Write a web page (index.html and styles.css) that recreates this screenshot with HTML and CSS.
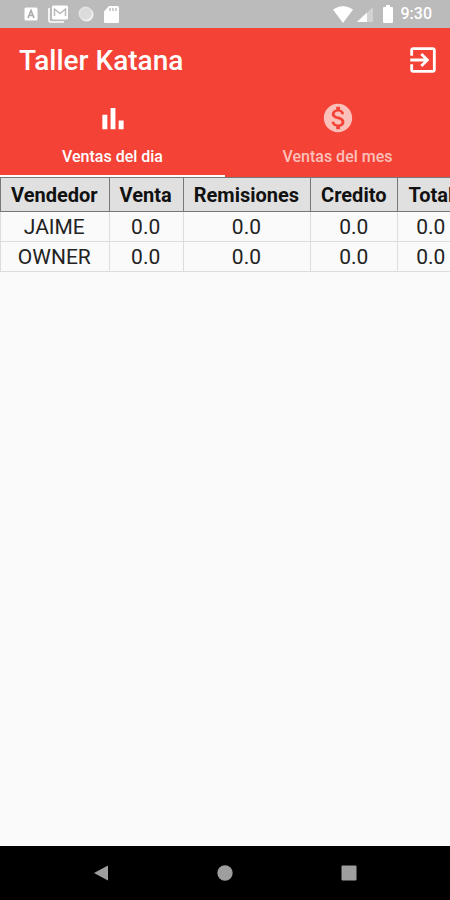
FILE: index.html
```html
<!DOCTYPE html>
<html lang="es">
<head>
    <meta charset="UTF-8">
    <meta name="viewport" content="width=device-width, initial-scale=1.0">
    <title>Taller Katana</title>
    <link rel="stylesheet" href="styles.css">
</head>
<body>

<div class="status-bar">
    <div class="status-left">
        <svg width="14" height="14" viewBox="0 0 14 14">
            <rect x="0.5" y="0.5" width="13" height="13" rx="1.5" fill="#fff"/>
            <path d="M4 11L7 3.5L10 11M5 8.5H9" fill="none" stroke="#aaa" stroke-width="1.6"/>
        </svg>
        <svg width="20" height="18" viewBox="0 0 20 18">
            <path d="M1 3V15.500Q1 17 2.500 17H16" fill="none" stroke="#fff" stroke-width="1.600"/>
            <rect x="4" y="0.500" width="16" height="14" rx="1.500" fill="#fff"/>
            <path d="M6.500 11V4L12 8.500L17.500 4V11" fill="none" stroke="#bbb" stroke-width="1.500"/>
        </svg>
        <svg width="16" height="16" viewBox="0 0 16 16">
            <circle cx="8.500" cy="8.500" r="7" fill="#f5f5f5"/>
            <circle cx="7.500" cy="7.500" r="6.500" fill="#dcdcdc" stroke="#e8e8e8"/>
        </svg>
        <svg width="15" height="17" viewBox="0 0 15 17">
            <path d="M5 0H13.500Q15 0 15 1.500V15.500Q15 17 13.500 17H1.500Q0 17 0 15.500V5.500Z" fill="#fff"/>
            <path d="M6 2V5M9 2V5M12 2V5" stroke="#bbb" stroke-width="1.400"/>
        </svg>
    </div>
    <div class="status-right">
        <svg width="20" height="17" viewBox="0 0 20 17">
            <path d="M0 3.500Q10 -3.500 20 3.500L10 17Z" fill="#fff"/>
        </svg>
        <svg class="signal" width="16" height="15" viewBox="0 0 16 15">
            <path d="M0 15L16 0V15Z" fill="#d2d2d2"/>
            <path d="M0 15L10 5.600V15Z" fill="#fff"/>
        </svg>
        <svg class="battery" width="10" height="18" viewBox="0 0 10 18">
            <path d="M3 0H7V2H9Q10 2 10 3V17Q10 18 9 18H1Q0 18 0 17V3Q0 2 1 2H3Z" fill="#fff"/>
        </svg>
        <span class="clock">9:30</span>
    </div>
</div>

<header class="app-header">
    <div class="toolbar">
        <h1>Taller Katana</h1>
        <button class="exit-button" aria-label="Salir">
            <svg width="34" height="34" viewBox="0 0 24 24">
                <path fill="#fff" d="M10.090 15.590L11.500 17l5-5-5-5-1.410 1.410L12.670 11H3v2h9.670l-2.580 2.590zM19 3H5c-1.110 0-2 .9-2 2v4h2V5h14v14H5v-4H3v4c0 1.100.89 2 2 2h14c1.100 0 2-.9 2-2V5c0-1.100-.9-2-2-2z"/>
            </svg>
        </button>
    </div>
    <nav class="tabs">
        <button class="tab active">
            <svg width="34" height="34" viewBox="0 0 24 24">
                <path fill="currentColor" d="M4.500 9.700H8V20H4.500zM10.300 5h3.400v15h-3.400zM16 13.800h3.500V20H16z"/>
            </svg>
            <span>Ventas del dia</span>
        </button>
        <button class="tab">
            <svg width="34" height="34" viewBox="0 0 24 24">
                <path fill="currentColor" d="M12 2C6.480 2 2 6.480 2 12s4.480 10 10 10 10-4.480 10-10S17.520 2 12 2zm1.410 16.090V20h-2.670v-1.930c-1.710-.36-3.160-1.460-3.270-3.400h1.960c.1 1.050.82 1.870 2.650 1.870 1.960 0 2.400-.98 2.400-1.590 0-.83-.44-1.610-2.670-2.140-2.480-.6-4.180-1.620-4.180-3.670 0-1.720 1.390-2.840 3.110-3.210V4h2.670v1.950c1.860.45 2.790 1.860 2.850 3.390H14.300c-.05-1.110-.64-1.870-2.220-1.870-1.500 0-2.400.68-2.400 1.640 0 .84.65 1.390 2.670 1.910s4.180 1.390 4.180 3.910c-.01 1.830-1.380 2.830-3.120 3.160z"/>
            </svg>
            <span>Ventas del mes</span>
        </button>
    </nav>
</header>

<main class="content">
    <table class="sales">
        <thead>
            <tr>
                <th>Vendedor</th>
                <th>Venta</th>
                <th>Remisiones</th>
                <th>Credito</th>
                <th>Total</th>
            </tr>
        </thead>
        <tbody>
            <tr>
                <td>JAIME</td>
                <td>0.0</td>
                <td>0.0</td>
                <td>0.0</td>
                <td>0.0</td>
            </tr>
            <tr>
                <td>OWNER</td>
                <td>0.0</td>
                <td>0.0</td>
                <td>0.0</td>
                <td>0.0</td>
            </tr>
        </tbody>
    </table>
</main>

<footer class="nav-bar">
    <button aria-label="Atras">
        <svg width="16" height="16" viewBox="0 0 16 16"><path d="M1 8L15 0.500V15.500Z" fill="#9e9e9e"/></svg>
    </button>
    <button aria-label="Inicio">
        <svg width="16" height="16" viewBox="0 0 16 16"><circle cx="8" cy="8" r="7.700" fill="#9e9e9e"/></svg>
    </button>
    <button aria-label="Recientes">
        <svg width="16" height="16" viewBox="0 0 16 16"><rect x="0.500" y="0.500" width="15" height="15" rx="1" fill="#9e9e9e"/></svg>
    </button>
</footer>

</body>
</html>
```

FILE: styles.css
```css
body {
    font-family: Roboto, sans-serif;
    background-color: #fafafa;
    color: #111;
    display: flex;
    flex-direction: column;
    min-height: 100vh;
    margin: 0;
}
button {
    background: none;
    border: 0;
    padding: 0;
    font-family: inherit;
    color: inherit;
    cursor: pointer;
}
svg {
    display: block;
}

/* Status bar */
.status-bar {
    display: flex;
    justify-content: space-between;
    align-items: center;
    height: 28px;
    padding: 0 18px 0 24px;
    background-color: #bbb;
    color: #fff;
}
.status-left, .status-right {
    display: flex;
    align-items: center;
}
.status-left {
    gap: 10px;
}
.signal {
    margin-left: 4px;
}
.battery {
    margin: 0 8px 0 10px;
}
.clock {
    font-size: 16px;
    font-weight: 500;
    line-height: 28px;
}

/* Red header */
.app-header {
    background-color: #f44336;
    color: #fff;
}
.toolbar {
    display: flex;
    justify-content: space-between;
    align-items: center;
    height: 64px;
    padding: 0 10px 0 19px;
}
h1 {
    margin: 0;
    font-size: 28px;
    font-weight: 500;
}
.tabs {
    display: flex;
}
.tab {
    flex: 1;
    display: flex;
    flex-direction: column;
    align-items: center;
    gap: 12px;
    padding: 9px 0 8px;
    border-bottom: 2px solid transparent;
    font-size: 16px;
    font-weight: 500;
    line-height: 20px;
    color: #fcc0bb;
}
.tab.active {
    color: #fff;
    border-bottom-color: #fff;
}

/* Sales table, wider than the screen */
.content {
    flex: 1;
    overflow: hidden;
}
.sales {
    border-collapse: collapse;
    white-space: nowrap;
    text-align: center;
}
th, td {
    padding: 0 11px 0 10px;
}
th {
    height: 33px;
    background-color: #e0e0e0;
    border: 1px solid #777;
    font-size: 20px;
    font-weight: 700;
}
td {
    height: 29px;
    border: 1px solid #ddd;
    font-size: 21px;
    color: #222;
}

/* System navigation */
.nav-bar {
    display: flex;
    justify-content: center;
    align-items: center;
    gap: 108px;
    height: 54px;
    background-color: #000;
}
```
